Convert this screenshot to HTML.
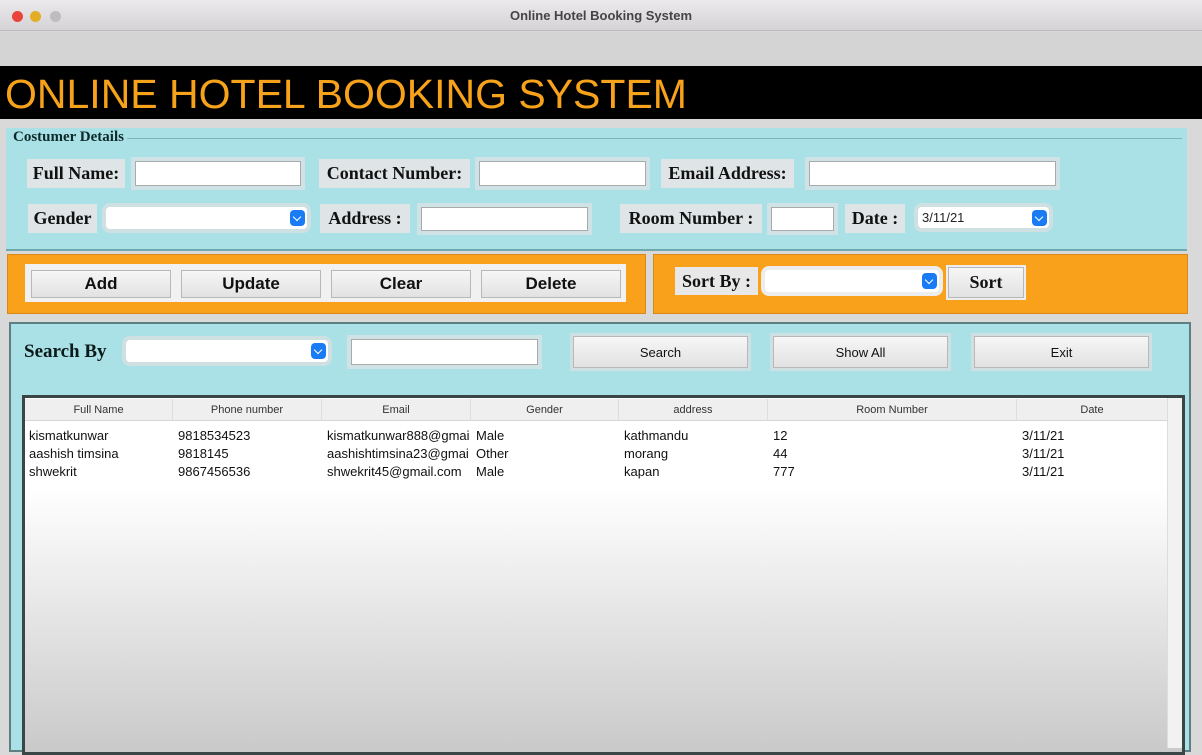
<!DOCTYPE html>
<html><head><meta charset="utf-8"><style>
*{box-sizing:border-box;margin:0;padding:0}
body{width:1202px;height:747px;overflow:hidden;background:#d9d9d9;font-family:"Liberation Sans",Arial,sans-serif;position:relative}
.a{position:absolute}
.lbl{position:absolute;background:#dfe5e6;font-family:"Liberation Serif",serif;font-weight:bold;font-size:18px;color:#111;display:flex;align-items:center;justify-content:center}
.in{position:absolute;background:#fff;border:1px solid #aaa;box-shadow:0 0 0 4px #cfe3e6}
.cb{position:absolute;background:#fff;border-radius:4px;box-shadow:0 0 0 4px #cfe0e2;font-size:13px;padding-left:4px;display:flex;align-items:center;color:#222}
.cb i{position:absolute;right:2px;top:50%;margin-top:-8px;width:15px;height:16px;background:#1a7cf5;border-radius:4px}
.cb i:after{content:"";position:absolute;left:4px;top:4px;width:5px;height:5px;border-right:1.6px solid #fff;border-bottom:1.6px solid #fff;transform:rotate(45deg)}
.btn{position:absolute;background:linear-gradient(#f6f6f6,#e2e2e2);border:1px solid #b8b8b8;display:flex;align-items:center;justify-content:center;font-size:17px;font-weight:bold;color:#111}
.sb{font-weight:normal;font-size:13px;box-shadow:0 0 0 3px #cfe0e2}
.th{position:absolute;top:399px;height:22px;font-size:11px;color:#333;display:flex;align-items:center;justify-content:center;border-right:1px solid #ddd}
.td{position:absolute;font-size:13px;color:#111}
</style></head><body>
<div class="a" style="left:0;top:0;width:1202px;height:31px;background:linear-gradient(#ebe9eb,#d5d3d5);border-bottom:1px solid #bbb"></div>
<div class="a" style="left:12px;top:11px;width:11px;height:11px;border-radius:50%;background:#e9453a"></div>
<div class="a" style="left:30px;top:11px;width:11px;height:11px;border-radius:50%;background:#e3ad24"></div>
<div class="a" style="left:50px;top:11px;width:11px;height:11px;border-radius:50%;background:#bdbdbd"></div>
<div class="a" style="left:0;top:8px;width:1202px;text-align:center;font-size:13px;font-weight:bold;color:#444">Online Hotel Booking System</div>
<div class="a" style="left:0;top:32px;width:1202px;height:34px;background:#d4d4d4"></div>
<div class="a" style="left:0;top:66px;width:1202px;height:53px;background:#000"></div>
<div class="a" style="left:5px;top:71px;font-size:41px;color:#f7a21b;white-space:nowrap">ONLINE HOTEL BOOKING SYSTEM</div>

<div class="a" style="left:6px;top:128px;width:1181px;height:123px;background:#a9e1e7;border-bottom:2px solid #6fa9ae"></div>
<div class="a" style="left:10px;top:138px;width:1172px;height:1px;background:#7fb4b8"></div>
<div class="a" style="left:10px;top:129px;background:#a9e1e7;padding:0 3px;font-family:'Liberation Serif',serif;font-weight:bold;font-size:15px;color:#0d2a2a">Costumer Details</div>

<div class="lbl" style="left:27px;top:159px;width:98px;height:29px">Full Name:</div>
<div class="in" style="left:135px;top:161px;width:166px;height:25px"></div>
<div class="lbl" style="left:319px;top:159px;width:151px;height:29px">Contact Number:</div>
<div class="in" style="left:479px;top:161px;width:167px;height:25px"></div>
<div class="lbl" style="left:661px;top:159px;width:133px;height:29px">Email Address:</div>
<div class="in" style="left:809px;top:161px;width:247px;height:25px"></div>

<div class="lbl" style="left:28px;top:204px;width:69px;height:29px">Gender</div>
<div class="cb" style="left:106px;top:207px;width:201px;height:22px"><i></i></div>
<div class="lbl" style="left:320px;top:204px;width:90px;height:29px">Address :</div>
<div class="in" style="left:421px;top:207px;width:167px;height:24px"></div>
<div class="lbl" style="left:620px;top:204px;width:142px;height:29px">Room Number :</div>
<div class="in" style="left:771px;top:207px;width:63px;height:24px"></div>
<div class="lbl" style="left:845px;top:204px;width:60px;height:29px">Date :</div>
<div class="cb" style="left:918px;top:207px;width:131px;height:21px">3/11/21<i></i></div>

<div class="a" style="left:7px;top:254px;width:639px;height:60px;background:#f9a11b;border:1px solid #d7891a"></div>
<div class="a" style="left:25px;top:264px;width:601px;height:38px;background:#f1f1f1"></div>
<div class="btn" style="left:31px;top:270px;width:140px;height:28px">Add</div>
<div class="btn" style="left:181px;top:270px;width:140px;height:28px">Update</div>
<div class="btn" style="left:331px;top:270px;width:140px;height:28px">Clear</div>
<div class="btn" style="left:481px;top:270px;width:140px;height:28px">Delete</div>

<div class="a" style="left:653px;top:254px;width:535px;height:60px;background:#f9a11b;border:1px solid #d7891a"></div>
<div class="lbl" style="left:675px;top:267px;width:83px;height:28px;background:#e8e8e8">Sort By :</div>
<div class="cb" style="left:765px;top:270px;width:174px;height:22px;box-shadow:0 0 0 4px #ededed"><i></i></div>
<div class="btn" style="left:948px;top:267px;width:76px;height:31px;font-family:'Liberation Serif',serif;font-size:18px;box-shadow:0 0 0 2px #ededed">Sort</div>

<div class="a" style="left:9px;top:322px;width:1182px;height:430px;background:#a9e1e7;border:2px solid #5d7f82"></div>
<div class="a" style="left:24px;top:341px;font-family:'Liberation Serif',serif;font-weight:bold;font-size:19px;color:#0d1a1a">Search By</div>
<div class="cb" style="left:126px;top:340px;width:202px;height:22px"><i></i></div>
<div class="in" style="left:351px;top:339px;width:187px;height:26px"></div>
<div class="btn sb" style="left:573px;top:336px;width:175px;height:32px">Search</div>
<div class="btn sb" style="left:773px;top:336px;width:175px;height:32px">Show All</div>
<div class="btn sb" style="left:974px;top:336px;width:175px;height:32px">Exit</div>

<div class="a" style="left:22px;top:395px;width:1163px;height:360px;border:3px solid #3a4546;background:linear-gradient(#fff 0,#fff 90px,#c8c8c8 360px)"></div>
<div class="a" style="left:1167px;top:398px;width:15px;height:350px;background:#f2f2f2;border-left:1px solid #ddd"></div>
<div class="a" style="left:25px;top:399px;width:1142px;height:22px;background:#efefef;border-bottom:1px solid #d6d6d6"></div>
<div class="th" style="left:25px;width:148px">Full Name</div>
<div class="th" style="left:173px;width:149px">Phone number</div>
<div class="th" style="left:322px;width:149px">Email</div>
<div class="th" style="left:471px;width:148px">Gender</div>
<div class="th" style="left:619px;width:149px">address</div>
<div class="th" style="left:768px;width:249px">Room Number</div>
<div class="th" style="left:1017px;width:150px;border:0">Date</div>

<div class="td" style="left:29px;top:428px">kismatkunwar</div>
<div class="td" style="left:178px;top:428px">9818534523</div>
<div class="td" style="left:327px;top:428px;width:142px;overflow:hidden;white-space:nowrap">kismatkunwar888@gmail.com</div>
<div class="td" style="left:476px;top:428px">Male</div>
<div class="td" style="left:624px;top:428px">kathmandu</div>
<div class="td" style="left:773px;top:428px">12</div>
<div class="td" style="left:1022px;top:428px">3/11/21</div>

<div class="td" style="left:29px;top:446px">aashish timsina</div>
<div class="td" style="left:178px;top:446px">9818145</div>
<div class="td" style="left:327px;top:446px;width:142px;overflow:hidden;white-space:nowrap">aashishtimsina23@gmail.com</div>
<div class="td" style="left:476px;top:446px">Other</div>
<div class="td" style="left:624px;top:446px">morang</div>
<div class="td" style="left:773px;top:446px">44</div>
<div class="td" style="left:1022px;top:446px">3/11/21</div>

<div class="td" style="left:29px;top:464px">shwekrit</div>
<div class="td" style="left:178px;top:464px">9867456536</div>
<div class="td" style="left:327px;top:464px;width:142px;overflow:hidden;white-space:nowrap">shwekrit45@gmail.com</div>
<div class="td" style="left:476px;top:464px">Male</div>
<div class="td" style="left:624px;top:464px">kapan</div>
<div class="td" style="left:773px;top:464px">777</div>
<div class="td" style="left:1022px;top:464px">3/11/21</div>
</body></html>
